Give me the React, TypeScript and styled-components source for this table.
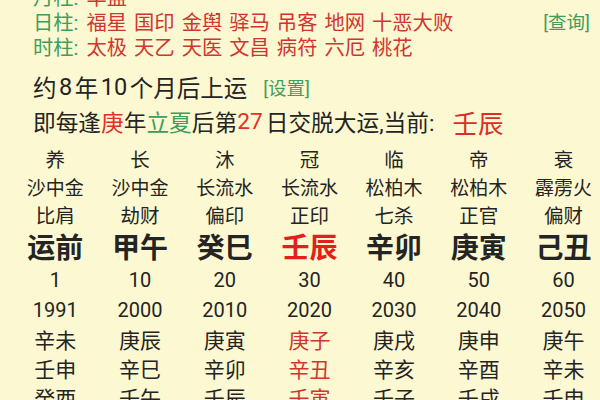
import React from "react";
import styled, { createGlobalStyle } from "styled-components";

const GlobalStyle = createGlobalStyle`
  html, body {
    margin: 0;
    padding: 0;
    background: #fcf8d1;
    overflow: hidden;
  }
  body {
    font-family: Roboto, "Noto Sans CJK SC", sans-serif;
    color: #242424;
  }
`;

const GREEN = "#3f9d5e";
const RED = "#d03530";

const Page = styled.div`
  width: 600px;
  height: 400px;
  overflow: hidden;
`;

const Inner = styled.div`
  margin-top: -17px;
  display: flex;
  flex-direction: column;
`;

const InfoBlock = styled.div`
  padding-left: 33px;
  padding-right: 10px;
  display: flex;
  flex-direction: column;
`;

const ShenshaRow = styled.div`
  display: flex;
  align-items: center;
  height: 25px;
  font-size: 20.3px;
  white-space: nowrap;
`;

const PillarLabel = styled.span`
  color: ${GREEN};
  margin-right: 8px;
`;

const Stars = styled.span`
  color: ${RED};
  word-spacing: 2px;
`;

const LinkText = styled.span`
  color: ${GREEN};
  font-size: 18.5px;
`;

const QueryLink = styled(LinkText)`
  margin-left: auto;
`;

const QiyunLine = styled.div`
  margin-top: 12px;
  height: 34px;
  display: flex;
  align-items: center;
  font-size: 23.5px;
  white-space: nowrap;
  color: #242424;
`;

const Num = styled.span`
  margin: 0 2.5px;
`;

const SettingLink = styled(LinkText)`
  margin-left: 16px;
`;

const JiaoyunLine = styled.div`
  height: 34px;
  display: flex;
  align-items: center;
  font-size: 22.7px;
  white-space: nowrap;
  color: #242424;
`;

const Hl = styled.span<{ $color: string }>`
  color: ${(p) => p.$color};
`;

const Gap = styled.span`
  margin-right: 3px;
`;

const Current = styled.span`
  color: #d83028;
  font-size: 25.5px;
  margin-left: 18px;
`;

const Table = styled.div`
  margin-top: 6px;
  padding-left: 13px;
  display: flex;
  flex-direction: column;
`;

const Row = styled.div<{ $h: number; $size: number; $bold?: boolean }>`
  display: grid;
  grid-template-columns: repeat(7, 84.7px);
  height: ${(p) => p.$h}px;
  align-items: center;
  font-size: ${(p) => p.$size}px;
  font-weight: ${(p) => (p.$bold ? 700 : 400)};
`;

const Cell = styled.div<{ $red?: boolean; $bright?: boolean }>`
  text-align: center;
  white-space: nowrap;
  color: ${(p) => (p.$bright ? "#e21f1b" : p.$red ? RED : "#242424")};
`;

type RowDef = {
  h: number;
  size: number;
  bold?: boolean;
  cells: string[];
  redCol?: boolean;
  bright?: boolean;
};

const rows: RowDef[] = [
  { h: 28, size: 19.5, cells: ["养", "长", "沐", "冠", "临", "帝", "衰"] },
  { h: 28, size: 19, cells: ["沙中金", "沙中金", "长流水", "长流水", "松柏木", "松柏木", "霹雳火"] },
  { h: 26, size: 19.5, cells: ["比肩", "劫财", "偏印", "正印", "七杀", "正官", "偏财"] },
  { h: 38, size: 28, bold: true, redCol: true, bright: true, cells: ["运前", "甲午", "癸巳", "壬辰", "辛卯", "庚寅", "己丑"] },
  { h: 32, size: 20, cells: ["1", "10", "20", "30", "40", "50", "60"] },
  { h: 28, size: 20, cells: ["1991", "2000", "2010", "2020", "2030", "2040", "2050"] },
  { h: 29, size: 21, redCol: true, cells: ["辛未", "庚辰", "庚寅", "庚子", "庚戌", "庚申", "庚午"] },
  { h: 29, size: 21, redCol: true, cells: ["壬申", "辛巳", "辛卯", "辛丑", "辛亥", "辛酉", "辛未"] },
  { h: 29, size: 21, redCol: true, cells: ["癸酉", "壬午", "壬辰", "壬寅", "壬子", "壬戌", "壬申"] },
];

const pillars = [
  { label: "月柱:", stars: "华盖", query: false },
  { label: "日柱:", stars: "福星 国印 金舆 驿马 吊客 地网 十恶大败", query: true },
  { label: "时柱:", stars: "太极 天乙 天医 文昌 病符 六厄 桃花", query: false },
];

export default function App() {
  return (
    <Page>
      <GlobalStyle />
      <Inner>
        <InfoBlock>
          {pillars.map((p) => (
            <ShenshaRow key={p.label}>
              <PillarLabel>{p.label}</PillarLabel>
              <Stars>{p.stars}</Stars>
              {p.query && <QueryLink>[查询]</QueryLink>}
            </ShenshaRow>
          ))}
          <QiyunLine>
            约<Num>8</Num>年<Num>10</Num>个月后上运
            <SettingLink>[设置]</SettingLink>
          </QiyunLine>
          <JiaoyunLine>
            即每逢<Hl $color="#e0302a">庚</Hl>年<Hl $color={GREEN}>立夏</Hl>后第
            <Gap>
              <Hl $color="#e0302a">27</Hl>
            </Gap>
            日交脱大运,当前:
            <Current>壬辰</Current>
          </JiaoyunLine>
        </InfoBlock>
        <Table>
          {rows.map((r, ri) => (
            <Row key={ri} $h={r.h} $size={r.size} $bold={r.bold}>
              {r.cells.map((c, ci) => (
                <Cell
                  key={ci}
                  $red={r.redCol && ci === 3}
                  $bright={r.bright && ci === 3}
                >
                  {c}
                </Cell>
              ))}
            </Row>
          ))}
        </Table>
      </Inner>
    </Page>
  );
}
